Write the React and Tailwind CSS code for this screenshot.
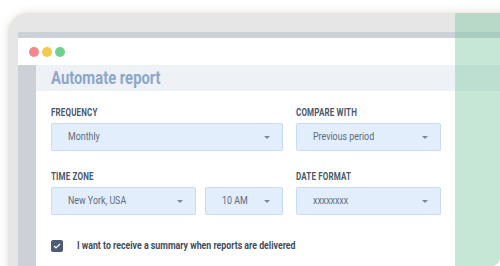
import React from "react";

function Cond({ children, className = "" }) {
  return (
    <span className={"inline-block origin-left scale-x-[0.8] whitespace-nowrap " + className}>
      {children}
    </span>
  );
}

function Select({ value, width, pad = "pl-[16px]" }) {
  return (
    <div
      className={
        "h-[28px] flex items-center justify-between bg-[#e3eefd] border border-[#c8dbf4] rounded-[2px] pr-[12px] " +
        pad +
        " " +
        width
      }
    >
      <Cond className="text-[11.5px] text-[#5b6a80] scale-x-[0.77]">{value}</Cond>
      <svg width="6" height="3" viewBox="0 0 6 3">
        <path d="M0 0h6L3 3z" fill="#7a889c" />
      </svg>
    </div>
  );
}

function Label({ children }) {
  return (
    <div className="h-[12px] leading-[12px] mb-[6px]">
      <Cond className="text-[10px] font-bold text-[#4a586d] tracking-[0.2px]">{children}</Cond>
    </div>
  );
}

export default function App() {
  return (
    <div
      className="w-[500px] h-[266px] overflow-hidden bg-white relative"
      style={{ fontFamily: "Roboto, 'Liberation Sans', sans-serif" }}
    >
      {/* device frame */}
      <div className="ml-[7px] mt-[12px] w-[520px] h-[280px] rounded-tl-[22px] bg-[#e6e6e6] border border-[#f6eed8] shadow-[0_0_10px_rgba(0,0,0,0.10)] pl-[10px] pt-[19px]">
        <div className="h-[6px] bg-[#ccd1d8]" />
        <div className="h-[27px] bg-white flex items-center gap-[3px] pl-[11px]">
          <span className="w-[10px] h-[10px] rounded-full bg-[#f4878e]" />
          <span className="w-[10px] h-[10px] rounded-full bg-[#f5c84c]" />
          <span className="w-[10px] h-[10px] rounded-full bg-[#6fd08f]" />
        </div>
        <div className="flex bg-white h-[240px]">
          <div className="w-[18px] bg-[#ccd1d8]" />
          <div className="flex-1">
            <div className="h-[26px] bg-[#eef2f7] pl-[15px] flex items-center">
              <Cond className="text-[19px] font-bold text-[#8ca6c9] scale-x-[0.78]">Automate report</Cond>
            </div>
            <div className="pl-[15px] pt-[14px]">
              <div className="flex gap-[13px]">
                <div>
                  <Label>FREQUENCY</Label>
                  <Select value="Monthly" width="w-[232px]" />
                </div>
                <div>
                  <Label>COMPARE WITH</Label>
                  <Select value="Previous period" width="w-[145px]" />
                </div>
              </div>
              <div className="flex gap-[13px] mt-[18px]">
                <div>
                  <Label>TIME ZONE</Label>
                  <div className="flex gap-[9px]">
                    <Select value="New York, USA" width="w-[145px]" />
                    <Select value="10 AM" width="w-[78px]" />
                  </div>
                </div>
                <div>
                  <Label>DATE FORMAT</Label>
                  <Select value="xxxxxxxx" width="w-[145px]" />
                </div>
              </div>
              <div className="flex items-center mt-[25px] h-[12px]">
                <span className="w-[12px] h-[12px] rounded-[2px] bg-[#4d5b76] flex items-center justify-center">
                  <svg width="8" height="6" viewBox="0 0 8 6">
                    <path d="M1 3l2 2 4-4" fill="none" stroke="#fff" strokeWidth="1.2" />
                  </svg>
                </span>
                <Cond className="ml-[14px] text-[11px] font-bold text-[#3f4c60]">
                  I want to receive a summary when reports are delivered
                </Cond>
              </div>
            </div>
          </div>
        </div>
      </div>
      {/* green overlay panel */}
      <div className="absolute left-[455px] top-[13px] right-0 bottom-0 rounded-br-[8px] bg-[rgba(125,198,162,0.44)]" />
    </div>
  );
}
